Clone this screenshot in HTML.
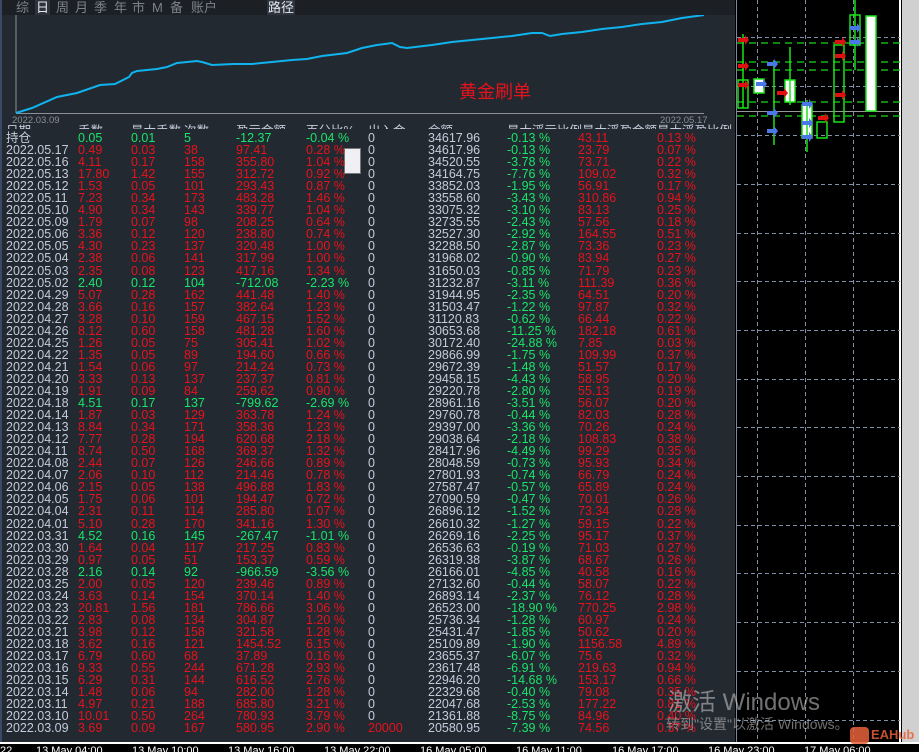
<!DOCTYPE html>
<html><head><meta charset="utf-8">
<style>
*{margin:0;padding:0;box-sizing:border-box}
html,body{width:919px;height:752px;overflow:hidden;background:#000;font-family:"Liberation Sans","Noto Sans CJK SC",sans-serif}
#panel{position:absolute;left:0;top:0;width:735px;height:742px;background:#232930;overflow:hidden;border-left:2px solid #3a4a66}
#tabs{position:absolute;left:0;top:0;width:735px;height:15px;background:#1c1f24;font-size:13px;color:#7d828a;line-height:15px}
#tabs span{position:absolute;top:0}
#tabs .on{background:#2e343d;color:#e6e9ee;padding:0 1px}
#rows{position:absolute;left:0;top:132px;width:735px}
.r{position:relative;height:12.06px;font-size:12.5px;line-height:12px;color:#c4ccdc;white-space:nowrap}
.r span{position:absolute;top:0}
.a{left:4px}.b{left:76px}.c{left:129px}.d{left:182px}.e{left:234px}.f{left:304px}.g{left:366px}.h{left:426px}.i{left:505px}.j{left:576px}.k{left:255px}.l{left:655px}
.R .b,.R .c,.R .d,.R .e,.R .f{color:#e8121c}
.G .b,.G .c,.G .d,.G .e,.G .f{color:#19e56b}
.r .i{color:#19e56b}.r .j,.r .l{color:#e8121c}
#hdr{position:absolute;left:0;top:124px;height:5px;width:735px;overflow:hidden;font-size:12.5px;color:#c4ccdc}
#hdr span{position:absolute;top:-4px}
#chart{position:absolute;left:736px;top:0;width:165px;height:742px;background:#000;border-left:1px solid #7d8898;border-right:2px solid #fff}
#scroll{position:absolute;left:902px;top:0;width:17px;height:742px;background:#d0d0d0}
#axis{position:absolute;left:0;top:742px;width:919px;height:10px;background:#000;border-top:2px solid #fff;font-size:11px;color:#fff;overflow:hidden}
#axis span{position:absolute;top:1px}
.wm1{position:absolute;left:668px;top:682px;font-size:24px;color:rgba(205,205,205,.55);white-space:nowrap}
.wm2{position:absolute;left:666px;top:714px;font-size:14px;color:rgba(205,205,205,.55);white-space:nowrap}
</style></head><body>
<div id="panel">
<div id="tabs">
<span style="left:14px">综</span><span class="on" style="left:33px">日</span><span style="left:54px">周</span><span style="left:73px">月</span><span style="left:92px">季</span><span style="left:112px">年</span><span style="left:130px">市</span><span style="left:150px">M</span><span style="left:168px">备</span><span style="left:189px">账户</span><span class="on" style="left:265px">路径</span>
</div>
<svg style="position:absolute;left:0;top:15px" width="735" height="110">
<line x1="14" y1="0" x2="14" y2="98" stroke="#8a8f98" stroke-width="1"/>
<line x1="14" y1="98.5" x2="702" y2="98.5" stroke="#8a8f98" stroke-width="1"/>
<polyline fill="none" stroke="#0fb4ee" stroke-width="2" points="14,98 30,93 55,82 75,78 98,70 113,69 127,62 130,58 135,56 155,54 165,52 175,48 195,46 200,47 210,50 232,49 250,49 270,47 290,45 305,44 320,41 345,38 360,33 375,30 390,28 398,32 405,33 430,30 450,27 470,25 490,23 510,21 530,18 540,18 548,21 560,19 580,17 600,14 620,12 640,9 660,7 680,3 702,0"/>
<text x="10" y="108" fill="#8a8f98" font-size="9.5" font-family="Liberation Sans">2022.03.09</text>
<text x="658" y="108" fill="#8a8f98" font-size="9.5" font-family="Liberation Sans">2022.05.17</text>
</svg>
<div style="position:absolute;left:457px;top:78px;font-size:18px;color:#e8121c">黄金刷单</div>
<div id="hdr"><span style="left:4px">日期</span><span style="left:76px">手数</span><span style="left:129px">最大手数</span><span style="left:182px">次数</span><span style="left:234px">盈亏金额</span><span style="left:304px">百分比%</span><span style="left:366px">出入金</span><span style="left:426px">余额</span><span style="left:505px">最大浮亏比例最大浮盈金额</span><span style="left:655px">最大浮盈比例</span></div>
<div style="position:absolute;left:342px;top:148px;width:17px;height:26px;background:#f0f0f4;border:1px solid #777"></div>
<div id="rows">
<div class="r G"><span class="a">持仓</span><span class="b">0.05</span><span class="c">0.01</span><span class="d">5</span><span class="e">-12.37</span><span class="f">-0.04 %</span><span class="g">0</span><span class="h">34617.96</span><span class="i">-0.13 %</span><span class="j">43.11</span><span class="l">0.13 %</span></div>
<div class="r R"><span class="a">2022.05.17</span><span class="b">0.49</span><span class="c">0.03</span><span class="d">38</span><span class="e">97.41</span><span class="f">0.28 %</span><span class="g">0</span><span class="h">34617.96</span><span class="i">-0.13 %</span><span class="j">23.79</span><span class="l">0.07 %</span></div>
<div class="r R"><span class="a">2022.05.16</span><span class="b">4.11</span><span class="c">0.17</span><span class="d">158</span><span class="e">355.80</span><span class="f">1.04 %</span><span class="g">0</span><span class="h">34520.55</span><span class="i">-3.78 %</span><span class="j">73.71</span><span class="l">0.22 %</span></div>
<div class="r R"><span class="a">2022.05.13</span><span class="b">17.80</span><span class="c">1.42</span><span class="d">155</span><span class="e">312.72</span><span class="f">0.92 %</span><span class="g">0</span><span class="h">34164.75</span><span class="i">-7.76 %</span><span class="j">109.02</span><span class="l">0.32 %</span></div>
<div class="r R"><span class="a">2022.05.12</span><span class="b">1.53</span><span class="c">0.05</span><span class="d">101</span><span class="e">293.43</span><span class="f">0.87 %</span><span class="g">0</span><span class="h">33852.03</span><span class="i">-1.95 %</span><span class="j">56.91</span><span class="l">0.17 %</span></div>
<div class="r R"><span class="a">2022.05.11</span><span class="b">7.23</span><span class="c">0.34</span><span class="d">173</span><span class="e">483.28</span><span class="f">1.46 %</span><span class="g">0</span><span class="h">33558.60</span><span class="i">-3.43 %</span><span class="j">310.86</span><span class="l">0.94 %</span></div>
<div class="r R"><span class="a">2022.05.10</span><span class="b">4.90</span><span class="c">0.34</span><span class="d">143</span><span class="e">339.77</span><span class="f">1.04 %</span><span class="g">0</span><span class="h">33075.32</span><span class="i">-3.10 %</span><span class="j">83.13</span><span class="l">0.25 %</span></div>
<div class="r R"><span class="a">2022.05.09</span><span class="b">1.79</span><span class="c">0.07</span><span class="d">98</span><span class="e">208.25</span><span class="f">0.64 %</span><span class="g">0</span><span class="h">32735.55</span><span class="i">-2.43 %</span><span class="j">57.56</span><span class="l">0.18 %</span></div>
<div class="r R"><span class="a">2022.05.06</span><span class="b">3.36</span><span class="c">0.12</span><span class="d">120</span><span class="e">238.80</span><span class="f">0.74 %</span><span class="g">0</span><span class="h">32527.30</span><span class="i">-2.92 %</span><span class="j">164.55</span><span class="l">0.51 %</span></div>
<div class="r R"><span class="a">2022.05.05</span><span class="b">4.30</span><span class="c">0.23</span><span class="d">137</span><span class="e">320.48</span><span class="f">1.00 %</span><span class="g">0</span><span class="h">32288.50</span><span class="i">-2.87 %</span><span class="j">73.36</span><span class="l">0.23 %</span></div>
<div class="r R"><span class="a">2022.05.04</span><span class="b">2.38</span><span class="c">0.06</span><span class="d">141</span><span class="e">317.99</span><span class="f">1.00 %</span><span class="g">0</span><span class="h">31968.02</span><span class="i">-0.90 %</span><span class="j">83.94</span><span class="l">0.27 %</span></div>
<div class="r R"><span class="a">2022.05.03</span><span class="b">2.35</span><span class="c">0.08</span><span class="d">123</span><span class="e">417.16</span><span class="f">1.34 %</span><span class="g">0</span><span class="h">31650.03</span><span class="i">-0.85 %</span><span class="j">71.79</span><span class="l">0.23 %</span></div>
<div class="r G"><span class="a">2022.05.02</span><span class="b">2.40</span><span class="c">0.12</span><span class="d">104</span><span class="e">-712.08</span><span class="f">-2.23 %</span><span class="g">0</span><span class="h">31232.87</span><span class="i">-3.11 %</span><span class="j">111.39</span><span class="l">0.36 %</span></div>
<div class="r R"><span class="a">2022.04.29</span><span class="b">5.07</span><span class="c">0.28</span><span class="d">162</span><span class="e">441.48</span><span class="f">1.40 %</span><span class="g">0</span><span class="h">31944.95</span><span class="i">-2.35 %</span><span class="j">64.51</span><span class="l">0.20 %</span></div>
<div class="r R"><span class="a">2022.04.28</span><span class="b">3.66</span><span class="c">0.16</span><span class="d">157</span><span class="e">382.64</span><span class="f">1.23 %</span><span class="g">0</span><span class="h">31503.47</span><span class="i">-1.22 %</span><span class="j">97.87</span><span class="l">0.32 %</span></div>
<div class="r R"><span class="a">2022.04.27</span><span class="b">3.28</span><span class="c">0.10</span><span class="d">159</span><span class="e">467.15</span><span class="f">1.52 %</span><span class="g">0</span><span class="h">31120.83</span><span class="i">-0.62 %</span><span class="j">66.44</span><span class="l">0.22 %</span></div>
<div class="r R"><span class="a">2022.04.26</span><span class="b">8.12</span><span class="c">0.60</span><span class="d">158</span><span class="e">481.28</span><span class="f">1.60 %</span><span class="g">0</span><span class="h">30653.68</span><span class="i">-11.25 %</span><span class="j">182.18</span><span class="l">0.61 %</span></div>
<div class="r R"><span class="a">2022.04.25</span><span class="b">1.26</span><span class="c">0.05</span><span class="d">75</span><span class="e">305.41</span><span class="f">1.02 %</span><span class="g">0</span><span class="h">30172.40</span><span class="i">-24.88 %</span><span class="j">7.85</span><span class="l">0.03 %</span></div>
<div class="r R"><span class="a">2022.04.22</span><span class="b">1.35</span><span class="c">0.05</span><span class="d">89</span><span class="e">194.60</span><span class="f">0.66 %</span><span class="g">0</span><span class="h">29866.99</span><span class="i">-1.75 %</span><span class="j">109.99</span><span class="l">0.37 %</span></div>
<div class="r R"><span class="a">2022.04.21</span><span class="b">1.54</span><span class="c">0.06</span><span class="d">97</span><span class="e">214.24</span><span class="f">0.73 %</span><span class="g">0</span><span class="h">29672.39</span><span class="i">-1.48 %</span><span class="j">51.57</span><span class="l">0.17 %</span></div>
<div class="r R"><span class="a">2022.04.20</span><span class="b">3.33</span><span class="c">0.13</span><span class="d">137</span><span class="e">237.37</span><span class="f">0.81 %</span><span class="g">0</span><span class="h">29458.15</span><span class="i">-4.43 %</span><span class="j">58.95</span><span class="l">0.20 %</span></div>
<div class="r R"><span class="a">2022.04.19</span><span class="b">1.91</span><span class="c">0.09</span><span class="d">84</span><span class="e">259.62</span><span class="f">0.90 %</span><span class="g">0</span><span class="h">29220.78</span><span class="i">-2.80 %</span><span class="j">55.13</span><span class="l">0.19 %</span></div>
<div class="r G"><span class="a">2022.04.18</span><span class="b">4.51</span><span class="c">0.17</span><span class="d">137</span><span class="e">-799.62</span><span class="f">-2.69 %</span><span class="g">0</span><span class="h">28961.16</span><span class="i">-3.51 %</span><span class="j">56.07</span><span class="l">0.20 %</span></div>
<div class="r R"><span class="a">2022.04.14</span><span class="b">1.87</span><span class="c">0.03</span><span class="d">129</span><span class="e">363.78</span><span class="f">1.24 %</span><span class="g">0</span><span class="h">29760.78</span><span class="i">-0.44 %</span><span class="j">82.03</span><span class="l">0.28 %</span></div>
<div class="r R"><span class="a">2022.04.13</span><span class="b">8.84</span><span class="c">0.34</span><span class="d">171</span><span class="e">358.36</span><span class="f">1.23 %</span><span class="g">0</span><span class="h">29397.00</span><span class="i">-3.36 %</span><span class="j">70.26</span><span class="l">0.24 %</span></div>
<div class="r R"><span class="a">2022.04.12</span><span class="b">7.77</span><span class="c">0.28</span><span class="d">194</span><span class="e">620.68</span><span class="f">2.18 %</span><span class="g">0</span><span class="h">29038.64</span><span class="i">-2.18 %</span><span class="j">108.83</span><span class="l">0.38 %</span></div>
<div class="r R"><span class="a">2022.04.11</span><span class="b">8.74</span><span class="c">0.50</span><span class="d">168</span><span class="e">369.37</span><span class="f">1.32 %</span><span class="g">0</span><span class="h">28417.96</span><span class="i">-4.49 %</span><span class="j">99.29</span><span class="l">0.35 %</span></div>
<div class="r R"><span class="a">2022.04.08</span><span class="b">2.44</span><span class="c">0.07</span><span class="d">126</span><span class="e">246.66</span><span class="f">0.89 %</span><span class="g">0</span><span class="h">28048.59</span><span class="i">-0.73 %</span><span class="j">95.93</span><span class="l">0.34 %</span></div>
<div class="r R"><span class="a">2022.04.07</span><span class="b">2.06</span><span class="c">0.10</span><span class="d">112</span><span class="e">214.46</span><span class="f">0.78 %</span><span class="g">0</span><span class="h">27801.93</span><span class="i">-0.74 %</span><span class="j">66.79</span><span class="l">0.24 %</span></div>
<div class="r R"><span class="a">2022.04.06</span><span class="b">2.15</span><span class="c">0.05</span><span class="d">138</span><span class="e">496.88</span><span class="f">1.83 %</span><span class="g">0</span><span class="h">27587.47</span><span class="i">-0.57 %</span><span class="j">65.89</span><span class="l">0.24 %</span></div>
<div class="r R"><span class="a">2022.04.05</span><span class="b">1.75</span><span class="c">0.06</span><span class="d">101</span><span class="e">194.47</span><span class="f">0.72 %</span><span class="g">0</span><span class="h">27090.59</span><span class="i">-0.47 %</span><span class="j">70.01</span><span class="l">0.26 %</span></div>
<div class="r R"><span class="a">2022.04.04</span><span class="b">2.31</span><span class="c">0.11</span><span class="d">114</span><span class="e">285.80</span><span class="f">1.07 %</span><span class="g">0</span><span class="h">26896.12</span><span class="i">-1.52 %</span><span class="j">73.34</span><span class="l">0.28 %</span></div>
<div class="r R"><span class="a">2022.04.01</span><span class="b">5.10</span><span class="c">0.28</span><span class="d">170</span><span class="e">341.16</span><span class="f">1.30 %</span><span class="g">0</span><span class="h">26610.32</span><span class="i">-1.27 %</span><span class="j">59.15</span><span class="l">0.22 %</span></div>
<div class="r G"><span class="a">2022.03.31</span><span class="b">4.52</span><span class="c">0.16</span><span class="d">145</span><span class="e">-267.47</span><span class="f">-1.01 %</span><span class="g">0</span><span class="h">26269.16</span><span class="i">-2.25 %</span><span class="j">95.17</span><span class="l">0.37 %</span></div>
<div class="r R"><span class="a">2022.03.30</span><span class="b">1.64</span><span class="c">0.04</span><span class="d">117</span><span class="e">217.25</span><span class="f">0.83 %</span><span class="g">0</span><span class="h">26536.63</span><span class="i">-0.19 %</span><span class="j">71.03</span><span class="l">0.27 %</span></div>
<div class="r R"><span class="a">2022.03.29</span><span class="b">0.97</span><span class="c">0.05</span><span class="d">51</span><span class="e">153.37</span><span class="f">0.59 %</span><span class="g">0</span><span class="h">26319.38</span><span class="i">-3.87 %</span><span class="j">68.67</span><span class="l">0.26 %</span></div>
<div class="r G"><span class="a">2022.03.28</span><span class="b">2.16</span><span class="c">0.14</span><span class="d">92</span><span class="e">-966.59</span><span class="f">-3.56 %</span><span class="g">0</span><span class="h">26166.01</span><span class="i">-4.85 %</span><span class="j">40.58</span><span class="l">0.16 %</span></div>
<div class="r R"><span class="a">2022.03.25</span><span class="b">2.00</span><span class="c">0.05</span><span class="d">120</span><span class="e">239.46</span><span class="f">0.89 %</span><span class="g">0</span><span class="h">27132.60</span><span class="i">-0.44 %</span><span class="j">58.07</span><span class="l">0.22 %</span></div>
<div class="r R"><span class="a">2022.03.24</span><span class="b">3.63</span><span class="c">0.14</span><span class="d">154</span><span class="e">370.14</span><span class="f">1.40 %</span><span class="g">0</span><span class="h">26893.14</span><span class="i">-2.37 %</span><span class="j">76.12</span><span class="l">0.28 %</span></div>
<div class="r R"><span class="a">2022.03.23</span><span class="b">20.81</span><span class="c">1.56</span><span class="d">181</span><span class="e">786.66</span><span class="f">3.06 %</span><span class="g">0</span><span class="h">26523.00</span><span class="i">-18.90 %</span><span class="j">770.25</span><span class="l">2.98 %</span></div>
<div class="r R"><span class="a">2022.03.22</span><span class="b">2.83</span><span class="c">0.08</span><span class="d">134</span><span class="e">304.87</span><span class="f">1.20 %</span><span class="g">0</span><span class="h">25736.34</span><span class="i">-1.28 %</span><span class="j">60.97</span><span class="l">0.24 %</span></div>
<div class="r R"><span class="a">2022.03.21</span><span class="b">3.98</span><span class="c">0.12</span><span class="d">158</span><span class="e">321.58</span><span class="f">1.28 %</span><span class="g">0</span><span class="h">25431.47</span><span class="i">-1.85 %</span><span class="j">50.62</span><span class="l">0.20 %</span></div>
<div class="r R"><span class="a">2022.03.18</span><span class="b">3.62</span><span class="c">0.16</span><span class="d">121</span><span class="e">1454.52</span><span class="f">6.15 %</span><span class="g">0</span><span class="h">25109.89</span><span class="i">-1.90 %</span><span class="j">1156.58</span><span class="l">4.89 %</span></div>
<div class="r R"><span class="a">2022.03.17</span><span class="b">6.79</span><span class="c">0.60</span><span class="d">68</span><span class="e">37.89</span><span class="f">0.16 %</span><span class="g">0</span><span class="h">23655.37</span><span class="i">-6.07 %</span><span class="j">75.6</span><span class="l">0.32 %</span></div>
<div class="r R"><span class="a">2022.03.16</span><span class="b">9.33</span><span class="c">0.55</span><span class="d">244</span><span class="e">671.28</span><span class="f">2.93 %</span><span class="g">0</span><span class="h">23617.48</span><span class="i">-6.91 %</span><span class="j">219.63</span><span class="l">0.94 %</span></div>
<div class="r R"><span class="a">2022.03.15</span><span class="b">6.29</span><span class="c">0.31</span><span class="d">144</span><span class="e">616.52</span><span class="f">2.76 %</span><span class="g">0</span><span class="h">22946.20</span><span class="i">-14.68 %</span><span class="j">153.17</span><span class="l">0.66 %</span></div>
<div class="r R"><span class="a">2022.03.14</span><span class="b">1.48</span><span class="c">0.06</span><span class="d">94</span><span class="e">282.00</span><span class="f">1.28 %</span><span class="g">0</span><span class="h">22329.68</span><span class="i">-0.40 %</span><span class="j">79.08</span><span class="l">0.35 %</span></div>
<div class="r R"><span class="a">2022.03.11</span><span class="b">4.97</span><span class="c">0.21</span><span class="d">188</span><span class="e">685.80</span><span class="f">3.21 %</span><span class="g">0</span><span class="h">22047.68</span><span class="i">-2.53 %</span><span class="j">177.22</span><span class="l">0.81 %</span></div>
<div class="r R"><span class="a">2022.03.10</span><span class="b">10.01</span><span class="c">0.50</span><span class="d">264</span><span class="e">780.93</span><span class="f">3.79 %</span><span class="g">0</span><span class="h">21361.88</span><span class="i">-8.75 %</span><span class="j">84.96</span><span class="l">0.40 %</span></div>
<div class="r R"><span class="a">2022.03.09</span><span class="b">3.69</span><span class="c">0.09</span><span class="d">167</span><span class="e">580.95</span><span class="f">2.90 %</span><span class="g" style="color:#e8121c">20000</span><span class="h">20580.95</span><span class="i">-7.39 %</span><span class="j">74.56</span><span class="l">0.37 %</span></div>
</div>
</div>
<div id="chart">
<svg width="163" height="742" style="position:absolute;left:0;top:0">
<g stroke="#8090a8" stroke-width="1" stroke-dasharray="4,3">
<line x1="20.5" y1="0" x2="20.5" y2="742"/><line x1="68.5" y1="0" x2="68.5" y2="742"/><line x1="116.5" y1="0" x2="116.5" y2="742"/>
<line x1="0" y1="37.5" x2="163" y2="37.5"/><line x1="0" y1="86.5" x2="163" y2="86.5"/><line x1="0" y1="135.5" x2="163" y2="135.5"/><line x1="0" y1="184.5" x2="163" y2="184.5"/><line x1="0" y1="233.5" x2="163" y2="233.5"/><line x1="0" y1="281.5" x2="163" y2="281.5"/><line x1="0" y1="330.5" x2="163" y2="330.5"/><line x1="0" y1="379.5" x2="163" y2="379.5"/><line x1="0" y1="427.5" x2="163" y2="427.5"/><line x1="0" y1="476.5" x2="163" y2="476.5"/><line x1="0" y1="525.5" x2="163" y2="525.5"/><line x1="0" y1="573.5" x2="163" y2="573.5"/><line x1="0" y1="622.5" x2="163" y2="622.5"/><line x1="0" y1="671.5" x2="163" y2="671.5"/><line x1="0" y1="720.5" x2="163" y2="720.5"/>
</g>
<g stroke="#19d719" stroke-width="1.2" stroke-dasharray="7,5">
<line x1="0" y1="43" x2="163" y2="43"/><line x1="0" y1="62" x2="163" y2="62"/><line x1="0" y1="70" x2="163" y2="70"/><line x1="0" y1="102" x2="163" y2="102"/><line x1="0" y1="116" x2="163" y2="116"/>
</g>
<line x1="0" y1="111.5" x2="163" y2="111.5" stroke="#999" stroke-width="1"/>
<g fill="none" stroke="#19e619" stroke-width="1.5">
<rect x="1" y="80" width="10" height="28"/><rect x="17" y="79" width="10" height="14" fill="#fff"/><rect x="48" y="80" width="10" height="22" fill="#fff"/><rect x="65" y="105" width="10" height="33" fill="#fff"/><rect x="80" y="122" width="10" height="16"/><rect x="97" y="45" width="10" height="77"/><rect x="113" y="15" width="10" height="30"/><rect x="129" y="16" width="10" height="95" fill="#fff"/>
<line x1="6" y1="34" x2="6" y2="108"/><line x1="37" y1="60" x2="37" y2="145"/><line x1="53" y1="47" x2="53" y2="105"/><line x1="70" y1="100" x2="70" y2="152"/><line x1="118" y1="0" x2="118" y2="70"/>
</g>
<g fill="#e01010"><polygon points="1,38 8,38 8,35 12,40 8,45 8,42 1,42"/><polygon points="1,64 8,64 8,61 12,66 8,71 8,68 1,68"/><polygon points="1,83 8,83 8,80 12,85 8,90 8,87 1,87"/><polygon points="98,40 105,40 105,37 109,42 105,47 105,44 98,44"/><polygon points="98,54 105,54 105,51 109,56 105,61 105,58 98,58"/><polygon points="98,93 105,93 105,90 109,95 105,100 105,97 98,97"/><polygon points="40,91 47,91 47,88 51,93 47,98 47,95 40,95"/><polygon points="81,116 88,116 88,113 92,118 88,123 88,120 81,120"/></g>
<g fill="#4a78e8"><polygon points="30,62 37,62 37,59 41,64 37,69 37,66 30,66"/><polygon points="30,111 37,111 37,108 41,113 37,118 37,115 30,115"/><polygon points="30,129 37,129 37,126 41,131 37,136 37,133 30,133"/><polygon points="65,102 72,102 72,99 76,104 72,109 72,106 65,106"/><polygon points="65,121 72,121 72,118 76,123 72,128 72,125 65,125"/><polygon points="65,135 72,135 72,132 76,137 72,142 72,139 65,139"/><polygon points="113,26 120,26 120,23 124,28 120,33 120,30 113,30"/><polygon points="113,40 120,40 120,37 124,42 120,47 120,44 113,44"/><polygon points="19,82 26,82 26,79 30,84 26,89 26,86 19,86"/></g>
</svg>
</div>
<div id="scroll"></div>
<div id="axis">
<span style="left:0">22</span><span style="left:36px">13 May 04:00</span><span style="left:132px">13 May 10:00</span><span style="left:228px">13 May 16:00</span><span style="left:324px">13 May 22:00</span><span style="left:420px">16 May 05:00</span><span style="left:516px">16 May 11:00</span><span style="left:612px">16 May 17:00</span><span style="left:708px">16 May 23:00</span><span style="left:804px">17 May 06:00</span>
</div>
<div class="wm1">激活 Windows</div>
<div class="wm2">转到"设置"以激活 Windows。</div>
<div style="position:absolute;left:850px;top:727px;width:19px;height:17px;background:#e8603a;border-radius:4px;opacity:.85"></div>
<div style="position:absolute;left:871px;top:727px;font-size:13px;font-weight:bold;color:#e8603a;opacity:.85">EAHub</div>
</body></html>
